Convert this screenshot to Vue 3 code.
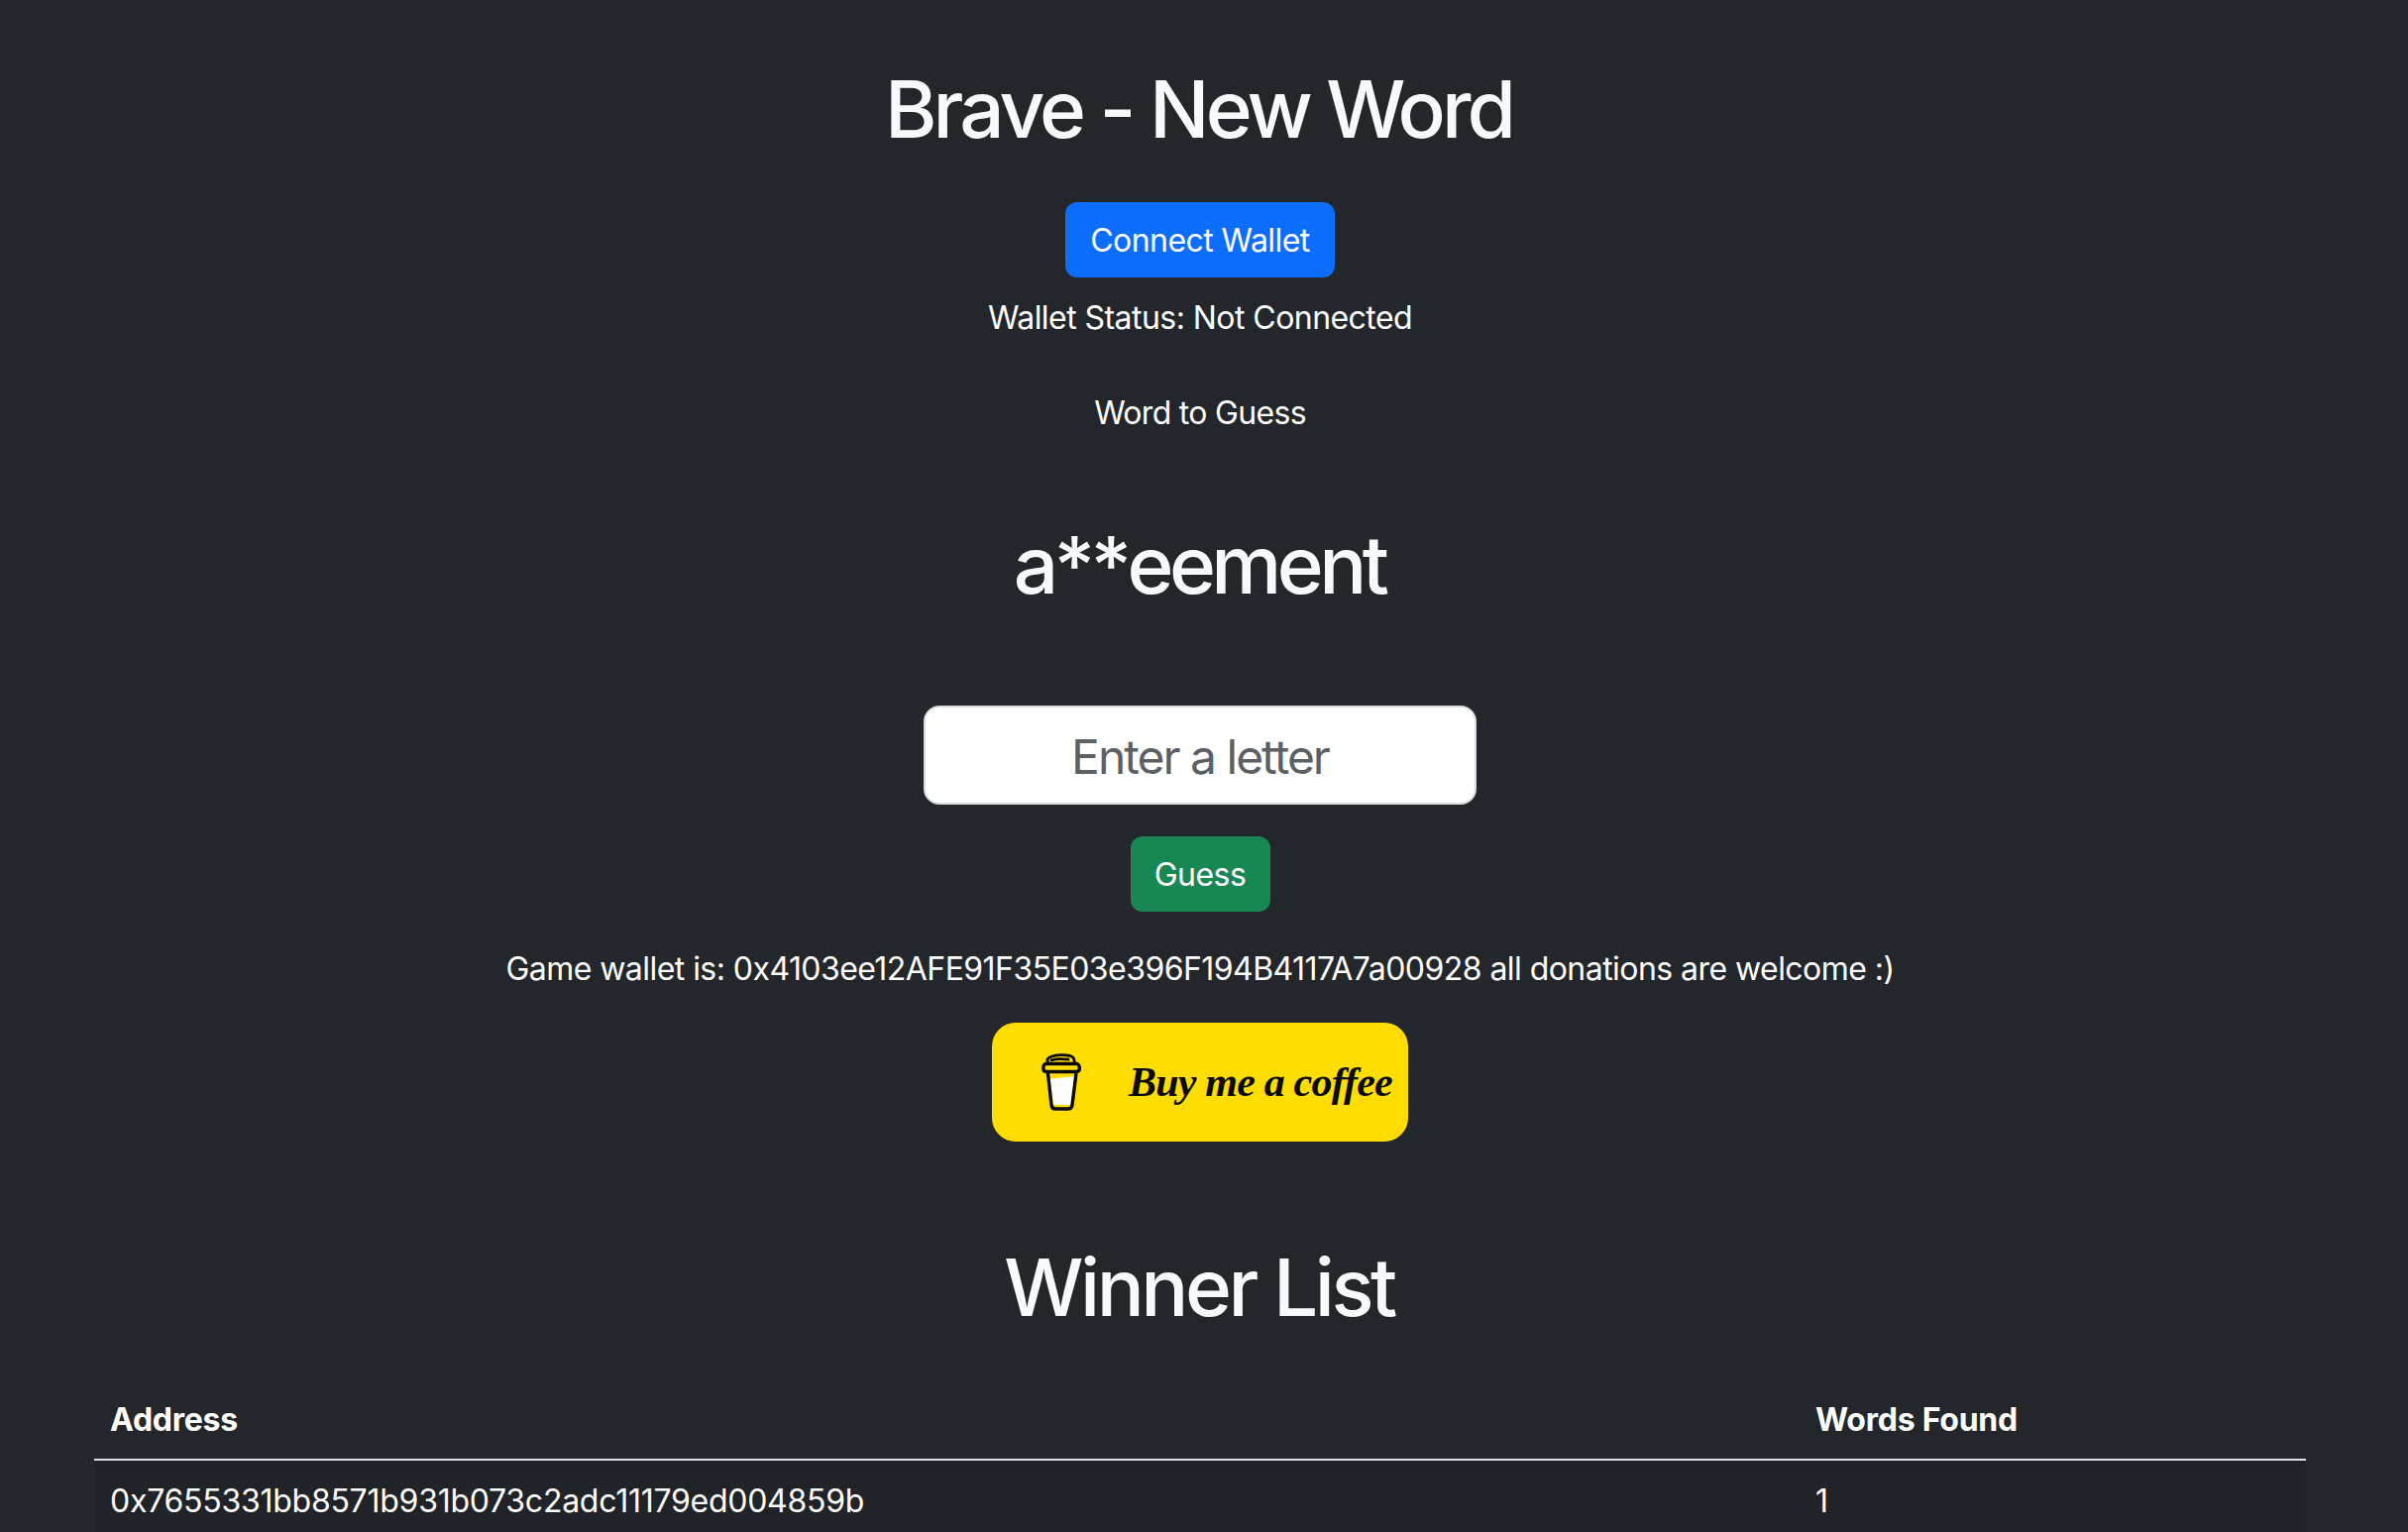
<script setup>
const winners = [{ address: '0x7655331bb8571b931b073c2adc11179ed004859b', words: 1 }]
</script>

<template>
  <main class="page">
    <div class="container">
      <h1 class="title">Brave - New Word</h1>
      <button class="btn btn-blue" type="button">Connect Wallet</button>
      <p class="status">Wallet Status: Not Connected</p>
      <p class="label">Word to Guess</p>
      <h1 class="word">a**eement</h1>
      <input class="letter" type="text" placeholder="Enter a letter" />
      <button class="btn btn-green" type="button">Guess</button>
      <p class="wallet">Game wallet is: 0x4103ee12AFE91F35E03e396F194B4117A7a00928 all donations are welcome :)</p>
      <a class="coffee" href="#">
        <svg class="cup" viewBox="0 0 40 58" width="40" height="58" aria-hidden="true">
          <path d="M8 21 L33.5 21 L31 42 Q30 51 29.5 52 L12 52 Z" fill="#fff" />
          <path d="M7 22 Q16 20 21 21 Q28 22 34 17 L35 23 L7 26 Z" fill="#FFDD00" />
          <path d="M6.5 20 L10 52 Q10.5 56 14 56 L27 56 Q30.5 56 31 52 L35 20" fill="none" stroke="#0a0a0a" stroke-width="3.4" stroke-linejoin="round" />
          <path d="M4 10.5 L36 10.5 Q38.4 11.5 38.4 15 Q38.4 18.5 35 18.5 L5 18.5 Q1.8 18.5 1.8 15 Q1.8 11.5 4 10.5 Z" fill="none" stroke="#0a0a0a" stroke-width="3.4" stroke-linejoin="round" />
          <path d="M7 10 Q3.5 5 11 2.8 Q20 0.8 29 2.5 Q34 4 33 10 M10 6.8 Q18 4.6 27 6.2" fill="none" stroke="#0a0a0a" stroke-width="2.8" stroke-linecap="round" />
        </svg>
        <span class="coffee-text">Buy me a coffee</span>
      </a>
      <h1 class="winners">Winner List</h1>
      <table class="table">
        <thead>
          <tr>
            <th class="col-address">Address</th>
            <th class="col-words">Words Found</th>
          </tr>
        </thead>
        <tbody>
          <tr v-for="w in winners" :key="w.address">
            <td class="cell-address">{{ w.address }}</td>
            <td>{{ w.words }}</td>
          </tr>
        </tbody>
      </table>
    </div>
  </main>
</template>

<style scoped>
.page {
  height: 1546px;
  overflow: hidden;
  background: #23272b;
  color: #fff;
  font-family: Inter, "Liberation Sans", sans-serif;
  font-size: 32px;
  line-height: 48px;
  padding-right: 8px;
  box-sizing: border-box;
}
.container {
  width: 2280px;
  box-sizing: border-box;
  margin: 0 auto;
  padding: 62px 24px 0;
  display: flex;
  flex-direction: column;
  align-items: center;
  text-align: center;
}
h1 {
  margin: 0;
  font-size: 80px;
  line-height: 96px;
  font-weight: 500;
  color: #f8f9fa;
}
.title { margin-bottom: 46px; letter-spacing: -3.9px; padding-right: 3px; }
.btn {
  height: 76px;
  padding: 2px 0 0;
  border: 0;
  border-radius: 12px;
  color: #fff;
  font: inherit;
  line-height: 48px;
  letter-spacing: -0.55px;
  white-space: nowrap;
}
.btn-blue { width: 272px; background: #0d6efd; }
.btn-green { width: 141px; background: #198754; margin-top: 32px; }
p { margin: 0; }
.status { margin-top: 17px; letter-spacing: -0.55px; }
.label { margin-top: 48px; letter-spacing: -0.7px; }
.word { margin-top: 81px; letter-spacing: -4.6px; padding-right: 2px; }
.letter {
  width: 558px;
  height: 100px;
  box-sizing: border-box;
  margin-top: 94px;
  padding-top: 3px;
  border: 2px solid #d8dce0;
  border-radius: 16px;
  background: #fff;
  text-align: center;
  font-family: inherit;
  font-size: 48px;
  letter-spacing: -2px;
  color: #212529;
  outline: none;
}
.letter::placeholder { color: #5c6065; opacity: 1; }
.wallet { margin-top: 34px; white-space: nowrap; letter-spacing: -0.55px; }
.coffee {
  width: 420px;
  height: 120px;
  margin-top: 30px;
  box-sizing: border-box;
  padding-left: 50px;
  display: flex;
  align-items: center;
  background: #ffdd00;
  border-radius: 24px;
  color: #0a0a0a;
  text-decoration: none;
}
.cup { flex: none; }
.coffee-text {
  margin-left: 48px;
  font-family: "Liberation Serif", serif;
  font-style: italic;
  font-weight: 700;
  font-size: 42px;
  letter-spacing: -0.8px;
  line-height: 1;
  white-space: nowrap;
}
.winners { margin-top: 99px; letter-spacing: -3.45px; padding-right: 2px; }
.table {
  width: 2232px;
  margin-top: 45px;
  border-collapse: collapse;
  table-layout: fixed;
  text-align: left;
}
.col-address { width: 1721px; }
th, td { padding: 17px 16px 15px; box-sizing: border-box; }
th { font-weight: 700; border-bottom: 2px solid #dee2e6; letter-spacing: -0.25px; }
td { background: #202327; }
.cell-address { letter-spacing: -0.26px; }
</style>

<style>
html, body { margin: 0; background: #23272b; }
</style>
